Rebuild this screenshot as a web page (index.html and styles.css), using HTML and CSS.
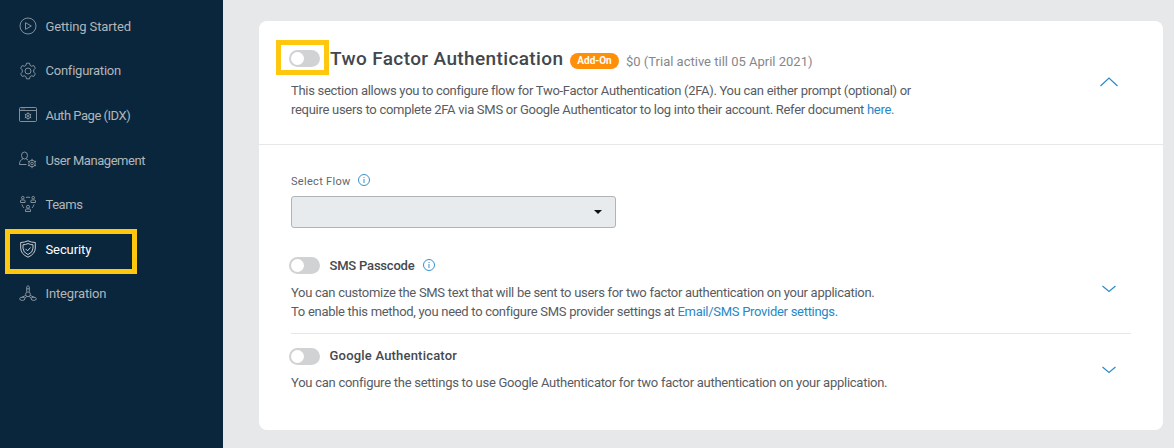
FILE: index.html
```html
<!DOCTYPE html>
<html lang="en">
<head>
<meta charset="utf-8">
<title>Security</title>
<link rel="stylesheet" href="styles.css">
</head>
<body>
<div class="app">
  <nav class="sidebar">
    <a class="item"><svg class="icon" viewBox="0 0 18 18"><circle cx="9" cy="9" r="8"/><path d="M6.500 5.700v6.600L12.300 9z"/></svg><span class="n1">Getting Started</span></a>
    <a class="item"><svg class="icon" viewBox="0 0 18 18"><circle cx="9" cy="9" r="3"/><path d="M7.500 1.200h3l.6 2.200 1.400.8 2.300-.6 1.500 2.600-1.600 1.700v2.200l1.600 1.700-1.500 2.600-2.300-.6-1.400.8-.6 2.200h-3l-.6-2.200-1.400-.8-2.300.6-1.500-2.600 1.600-1.700V7.900L1.700 6.200l1.500-2.600 2.300.6 1.400-.8z" stroke-linejoin="round"/></svg><span class="n2">Configuration</span></a>
    <a class="item"><svg class="icon" viewBox="0 0 18 18"><rect x=".5" y="1.500" width="17" height="14" rx="1"/><path d="M.5 4.500h17M2.500 3h1M4.500 3h1M9 6.300v1.400M9 12.300v1.400M5.800 8.100l1.300.8M10.900 11.100l1.300.8M12.200 8.100l-1.300.8M7.100 11.100l-1.300.8"/><circle cx="9" cy="10" r="2.500"/><circle cx="9" cy="10" r=".8"/></svg><span class="n3">Auth Page (IDX)</span></a>
    <a class="item lower"><svg class="icon" viewBox="0 0 18 18"><ellipse cx="5.500" cy="4.500" rx="3" ry="3.500"/><path d="M4 7.800C1.500 9 .5 10.500.5 13.500h7M7.200 8l1.800 1M13 7.800v1.500M13 15.700v1.500M8.900 10.100l1.400.8M15.700 14.100l1.400.8M17.100 10.100l-1.400.8M10.300 14.100l-1.400.8"/><circle cx="13" cy="12.500" r="3.300"/><circle cx="13" cy="12.500" r="1.300"/></svg><span class="n4">User Management</span></a>
    <a class="item"><svg class="icon" viewBox="0 0 18 18"><circle cx="3.800" cy="2.700" r="1.300"/><circle cx="14.200" cy="2.700" r="1.300"/><circle cx="9" cy="11.800" r="1.500"/><path d="M1.500 7.500V6q0-1 1-1h2.600q1 0 1 1v1.500zM11.900 7.500V6q0-1 1-1h2.600q1 0 1 1v1.500zM6.500 16.500V15q0-1 1-1h3q1 0 1 1v1.500zM7 2.500q2-.8 4 0M3 9.500q.5 2 2 3.500M15 9.500q-.5 2-2 3.500"/></svg><span class="n5">Teams</span></a>
    <a class="item lower active"><svg class="icon" viewBox="0 0 18 18"><path d="M9 .8Q5.500 2.500 1.700 2.500V8q0 6 7.300 9.200Q16.300 14 16.300 8V2.500Q12.500 2.500 9 .8z"/><path d="M9 3.500Q6.500 4.800 4 4.800V8.200q0 4.200 5 6.400 5-2.200 5-6.400V4.800Q11.500 4.800 9 3.500zM6.500 8.800l2 2 3-3.300"/></svg><span class="n6">Security</span></a>
    <a class="item"><svg class="icon" viewBox="0 0 18 18"><circle cx="9" cy="10.300" r="2.400"/><path d="M7.700 7.800V3q1.300-3 2.600 0v4.800M7.700 4.800h2.600M6.700 11.500l-4 1.800M7.800 12.500l-2 1.700M11.300 11.500l4 1.800M10.200 12.500l2 1.700"/><ellipse cx="3.300" cy="14.800" rx="2.600" ry="1.600"/><ellipse cx="14.700" cy="14.800" rx="2.600" ry="1.600"/></svg><span class="n7">Integration</span></a>
  </nav>
  <main class="content">
    <section class="card">
      <header class="head">
        <div class="titlebar">
          <span class="marker"><span class="toggle"></span></span>
          <h1 class="title">Two Factor Authentication</h1>
          <span class="badge">Add-On</span>
          <span class="price">$0 (Trial active till 05 April 2021)</span>
        </div>
        <p class="text intro"><span class="l1">This section allows you to configure flow for Two-Factor Authentication (2FA). You can either prompt (optional) or</span><br><span class="l2">require users to complete 2FA via SMS or Google Authenticator to log into their account. Refer document <a class="link">here.</a></span></p>
        <svg class="chevron up" viewBox="0 0 18 10"><path d="M.5 9 9 1l8.500 8"/></svg>
      </header>
      <div class="flow">
        <div class="label"><span class="select-label">Select Flow</span><svg class="info" viewBox="0 0 12 12"><circle cx="6" cy="6" r="5.500"/><path d="M6 5v4M6 3v1"/></svg></div>
        <div class="select"><svg class="caret" viewBox="0 0 8 4"><path d="M0 0h8L4 4z"/></svg></div>
      </div>
      <div class="method sms">
        <div class="method-head"><span class="toggle"></span><h2 class="sub s1">SMS Passcode</h2><svg class="info" viewBox="0 0 12 12"><circle cx="6" cy="6" r="5.500"/><path d="M6 5v4M6 3v1"/></svg></div>
        <p class="text"><span class="l3">You can customize the SMS text that will be sent to users for two factor authentication on your application.</span><br><span class="l4">To enable this method, you need to configure SMS provider settings at <a class="link">Email/SMS Provider settings.</a></span></p>
        <svg class="chevron down" viewBox="0 0 14 8"><path d="M.5 1 7 6.500 13.500 1"/></svg>
      </div>
      <div class="method google">
        <div class="method-head"><span class="toggle"></span><h2 class="sub s2">Google Authenticator</h2></div>
        <p class="text"><span class="l5">You can configure the settings to use Google Authenticator for two factor authentication on your application.</span></p>
        <svg class="chevron down" viewBox="0 0 14 8"><path d="M.5 1 7 6.500 13.500 1"/></svg>
      </div>
    </section>
  </main>
</div>
</body>
</html>
```
FILE: styles.css
```css
*, *::before, *::after { box-sizing: border-box; }
body { margin: 0; font-family: Roboto, "Liberation Sans", sans-serif; background: #e7e8ea; }
h1, h2, p { margin: 0; }
.app { display: flex; width: 1174px; height: 448px; overflow: hidden; }
.sidebar { width: 223px; flex: none; background: #0a263c; padding-top: 4px; }
.item { position: relative; display: flex; align-items: center; gap: 8.500px; height: 44.5px; padding-left: 19px; font-size: 13px; color: #b1b6ba; white-space: nowrap; }
.lower { padding-top: 1px; }
.icon { width: 18px; height: 18px; fill: none; stroke: #98a2aa; stroke-width: .85; }
.n1 { letter-spacing: -.13px; }
.n2 { letter-spacing: -.23px; }
.n3 { letter-spacing: -.48px; }
.n4 { letter-spacing: -.45px; }
.n5 { letter-spacing: -.45px; }
.n6 { letter-spacing: -.1px; }
.n7 { letter-spacing: -.14px; }
.active { color: #fff; }
.active .icon { stroke: #e5e9ec; }
.active::after { content: ""; position: absolute; left: 5px; top: 2.500px; width: 132px; height: 45px; border: 5px solid #ffc80e; }
.content { flex: 1; padding: 21px 11px 18px 36px; }
.card { height: 409px; background: #fff; border-radius: 8px; overflow: hidden; }
.head { position: relative; height: 124px; padding: 19px 0 0 17px; border-bottom: 1px solid #e6e7e9; }
.titlebar { display: flex; align-items: center; height: 35px; white-space: nowrap; }
.marker { display: flex; align-items: center; width: 53px; height: 35px; padding: 1px 0 0 7.500px; border: 5px solid #ffc80e; }
.toggle { flex: none; display: block; width: 31px; height: 17px; border-radius: 9px; background: #d1d2d4; padding: 2px; }
.toggle::before { content: ""; display: block; width: 13px; height: 13px; border-radius: 50%; background: #fff; }
.title { width: 241px; padding: 2px 0 0 1px; font-size: 19px; line-height: 24px; font-weight: 500; color: #42474e; letter-spacing: .38px; }
.badge { width: 49px; height: 16px; margin-top: 7px; border-radius: 8px; background: #ff8e08; color: #fff; font-size: 10px; font-weight: 700; line-height: 16px; text-align: center; }
.price { margin: 7px 0 0 7px; font-size: 13px; color: #84878b; }
.text { font-size: 13px; line-height: 19px; color: #585c62; white-space: nowrap; }
.intro { padding: 6px 0 0 15px; }
.l1 { letter-spacing: -.29px; }
.l2 { letter-spacing: -.28px; }
.l3 { letter-spacing: -.29px; }
.l4 { letter-spacing: -.29px; }
.l5 { letter-spacing: -.26px; }
.link { color: #2588c9; }
.chevron { position: absolute; fill: none; stroke: #2a8bcb; stroke-width: 1.200; }
.up { width: 18px; height: 10px; right: 45px; top: 56px; }
.down { width: 14px; height: 8px; right: 15px; }
.flow { padding: 28px 0 0 32px; height: 103px; }
.label { display: flex; align-items: center; height: 14px; gap: 7px; font-size: 11px; color: #62666b; }
.select-label { width: 60px; white-space: nowrap; margin-top: 3px; letter-spacing: .3px; }
.info { width: 12px; height: 12px; margin-top: -1px; fill: none; stroke: #3791cf; stroke-width: 1; }
.select { display: flex; justify-content: flex-end; align-items: center; width: 325px; height: 32px; margin-top: 9px; padding-right: 13px; border: 1px solid #b0b4b7; border-radius: 3px; background: #e7ebee; }
.caret { width: 8px; height: 4px; fill: #111; }
.method { position: relative; margin: 0 32px; }
.sms { height: 86px; padding-top: 9px; border-bottom: 1px solid #e6e7e9; }
.google { padding-top: 14px; }
.method-head { display: flex; align-items: center; height: 17px; margin-left: -2.500px; }
.sub { margin-left: 10px; font-size: 13px; line-height: 17px; font-weight: 500; color: #44494f; white-space: nowrap; }
.s1 { width: 93px; letter-spacing: -.2px; }
.s2 { margin-top: -2px; letter-spacing: .2px; }
.sms .text { margin-top: 9px; }
.google .text { margin-top: 8px; }
.sms .down { top: 37px; }
.google .down { top: 32px; }
```
